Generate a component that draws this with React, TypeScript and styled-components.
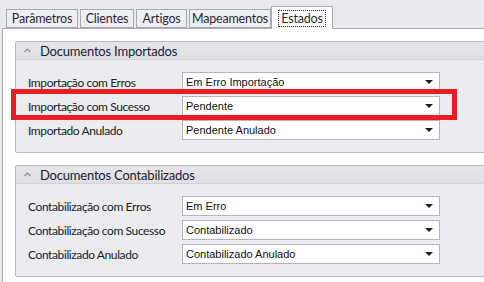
import styled, { createGlobalStyle } from 'styled-components';

const GlobalStyle = createGlobalStyle`
  html, body {
    margin: 0;
    padding: 0;
    background: #e9eaee;
  }
  body {
    font-family: Lato, "Open Sans", sans-serif;
    color: #1e1e1e;
  }
`;

const Window = styled.div`
  position: relative;
  width: 484px;
  height: 282px;
  overflow: hidden;
  background: #e9eaee;
`;

const TabStrip = styled.div`
  display: flex;
  align-items: flex-end;
  gap: 2px;
  height: 29px;
  padding-left: 6px;
  box-sizing: border-box;
  position: relative;
  z-index: 1;
`;

const Tab = styled.div<{ $active?: boolean; $width: number }>`
  display: flex;
  align-items: center;
  justify-content: center;
  box-sizing: border-box;
  height: ${p => (p.$active ? '23px' : '19px')};
  width: ${p => p.$width}px;
  margin: ${p => (p.$active ? '0 -2px' : '0 0 1px')};
  border: 1px solid #a9abb2;
  border-bottom: ${p => (p.$active ? 'none' : '1px solid #a9abb2')};
  background: ${p => (p.$active ? '#ffffff' : '#eeeff2')};
  font-size: 12.5px;
  letter-spacing: -0.2px;
  color: #2b2b33;
  z-index: ${p => (p.$active ? 2 : 1)};

  span {
    padding: 0 2px;
    outline: ${p => (p.$active ? '1px dotted #333' : 'none')};
    line-height: 15px;
  }
`;

const Panel = styled.div`
  margin-left: 2px;
  margin-top: -1px;
  border-top: 1px solid #a9abb2;
  border-left: 1px solid #a9abb2;
  background: #ffffff;
  padding: 12px 0 12px 12px;
  display: flex;
  flex-direction: column;
  gap: 12px;
  height: 260px;
  box-sizing: border-box;
`;

const Group = styled.section`
  border: 1px solid #b8b9c0;
  border-radius: 2px;
  margin-right: -10px;
  background: #ebecf0;
`;

const GroupHeader = styled.div`
  display: flex;
  align-items: center;
  height: 17px;
  padding-left: 8px;
  background: linear-gradient(#e5e6ea, #dfe0e4);
  border-bottom: 1px solid #d2d3d8;
  font-size: 13px;
  letter-spacing: -0.2px;
  color: #221a36;

  svg {
    margin-right: 9px;
  }
`;

const GroupBody = styled.div`
  display: flex;
  flex-direction: column;
  gap: 4px;
  padding: 12px 0 12px 12px;
`;

const Row = styled.div`
  display: flex;
  align-items: center;
  height: 20px;
`;

const Label = styled.label`
  width: 154px;
  font-size: 12px;
  letter-spacing: -0.4px;
  color: #222;
`;

const Combo = styled.div`
  display: flex;
  align-items: center;
  justify-content: space-between;
  width: 258px;
  height: 20px;
  box-sizing: border-box;
  border: 1px solid #b4b5b9;
  background: #fff;
  padding: 0 6px 0 3px;
  font-family: "Liberation Sans", Arial, sans-serif;
  font-size: 11px;
  color: #111;
`;

const Highlight = styled.div`
  position: absolute;
  left: 11px;
  top: 89px;
  width: 446px;
  height: 31px;
  box-sizing: border-box;
  border: 5px solid #ed1c24;
  pointer-events: none;
`;

const Chevron = () => (
  <svg width="7" height="5" viewBox="0 0 7 5">
    <path d="M0.5 4 L3.5 1 L6.5 4" fill="none" stroke="#8a8b92" strokeWidth="1.2" />
  </svg>
);

const Arrow = () => (
  <svg width="8" height="4" viewBox="0 0 8 4">
    <path d="M0 0 H8 L4 4 Z" fill="#1e1e28" />
  </svg>
);

const tabs = [
  { title: 'Parâmetros', width: 72 },
  { title: 'Clientes', width: 54 },
  { title: 'Artigos', width: 51 },
  { title: 'Mapeamentos', width: 82 },
  { title: 'Estados', width: 62, active: true },
];

const groups = [
  {
    title: 'Documentos Importados',
    rows: [
      ['Importação com Erros', 'Em Erro Importação'],
      ['Importação com Sucesso', 'Pendente'],
      ['Importado Anulado', 'Pendente Anulado'],
    ],
  },
  {
    title: 'Documentos Contabilizados',
    rows: [
      ['Contabilização com Erros', 'Em Erro'],
      ['Contabilização com Sucesso', 'Contabilizado'],
      ['Contabilizado Anulado', 'Contabilizado Anulado'],
    ],
  },
];

const App = (): JSX.Element => {
  return (
    <Window>
      <GlobalStyle />
      <TabStrip>
        {tabs.map(tab => (
          <Tab key={tab.title} $active={tab.active} $width={tab.width}>
            <span>{tab.title}</span>
          </Tab>
        ))}
      </TabStrip>

      <Panel>
        {groups.map(group => (
          <Group key={group.title}>
            <GroupHeader>
              <Chevron />
              {group.title}
            </GroupHeader>
            <GroupBody>
              {group.rows.map(([label, value]) => (
                <Row key={label}>
                  <Label>{label}</Label>
                  <Combo>
                    <span>{value}</span>
                    <Arrow />
                  </Combo>
                </Row>
              ))}
            </GroupBody>
          </Group>
        ))}
      </Panel>

      <Highlight />
    </Window>
  );
};

export default App;
